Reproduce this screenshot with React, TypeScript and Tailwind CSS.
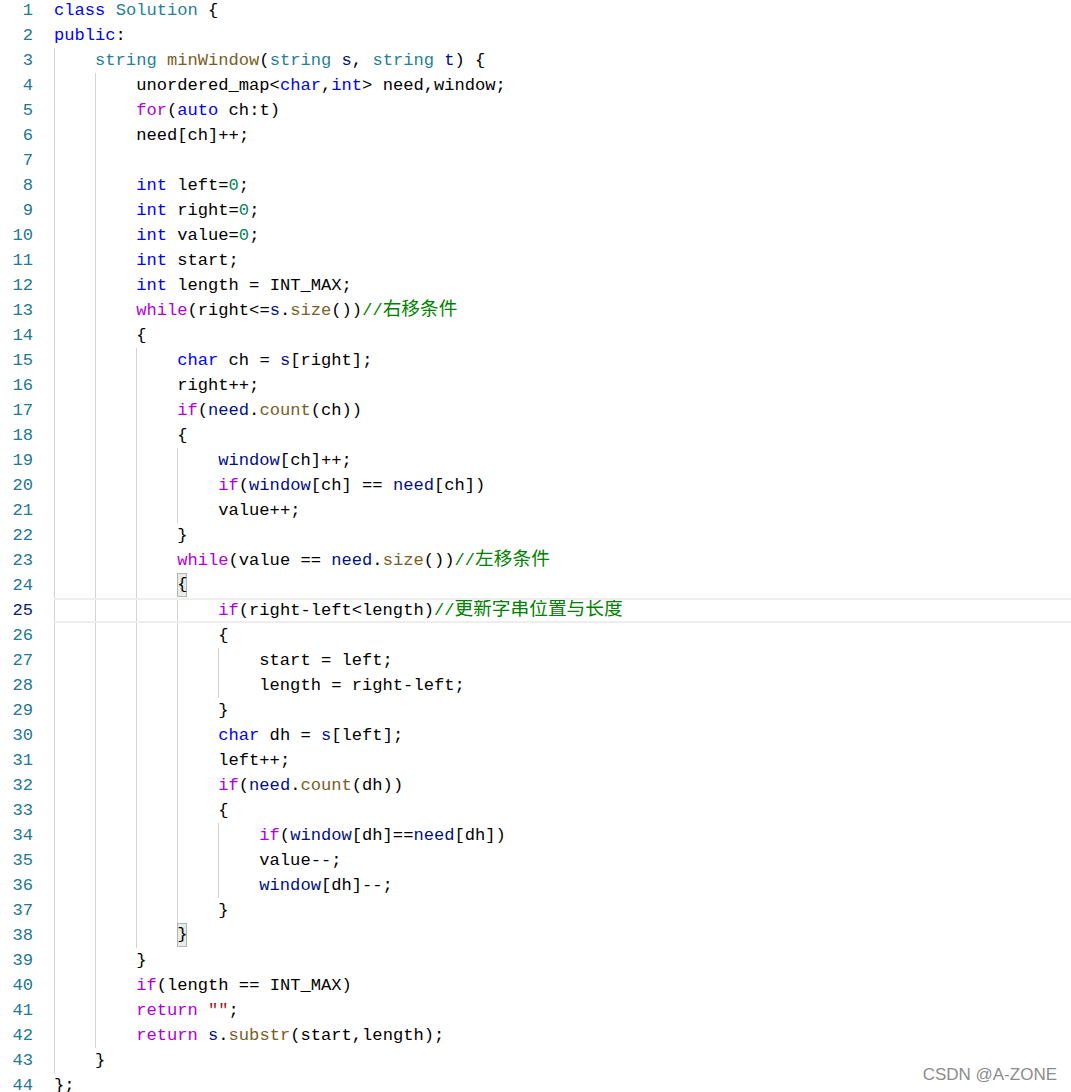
import React from "react";

const lines: string[] = [
  "class Solution {",
  "public:",
  "    string minWindow(string s, string t) {",
  "        unordered_map<char,int> need,window;",
  "        for(auto ch:t)",
  "        need[ch]++;",
  "",
  "        int left=0;",
  "        int right=0;",
  "        int value=0;",
  "        int start;",
  "        int length = INT_MAX;",
  "        while(right<=s.size())//右移条件",
  "        {",
  "            char ch = s[right];",
  "            right++;",
  "            if(need.count(ch))",
  "            {",
  "                window[ch]++;",
  "                if(window[ch] == need[ch])",
  "                value++;",
  "            }",
  "            while(value == need.size())//左移条件",
  "            {",
  "                if(right-left<length)//更新字串位置与长度",
  "                {",
  "                    start = left;",
  "                    length = right-left;",
  "                }",
  "                char dh = s[left];",
  "                left++;",
  "                if(need.count(dh))",
  "                {",
  "                    if(window[dh]==need[dh])",
  "                    value--;",
  "                    window[dh]--;",
  "                }",
  "            }",
  "        }",
  "        if(length == INT_MAX)",
  '        return "";',
  "        return s.substr(start,length);",
  "    }",
  "};",
];

const KW = new Set(["class", "public", "int", "char", "auto"]);
const CTRL = new Set(["for", "while", "if", "return"]);
const TYPE = new Set(["Solution", "string"]);
const FN = new Set(["minWindow", "size", "count", "substr"]);
const NAVY = new Set(["s", "t", "need", "window"]);

function tokenize(text: string, lineNo: number): React.ReactNode[] {
  const out: React.ReactNode[] = [];
  const re = /(\/\/.*$)|("[^"]*")|([A-Za-z_][A-Za-z0-9_]*)|(\d+)|(\s+)|(.)/g;
  let m: RegExpExecArray | null;
  let i = 0;
  const navyOk = lineNo < 4 || lineNo > 6;
  while ((m = re.exec(text)) !== null) {
    const k = i++;
    if (m[1]) {
      const cjk = m[1].slice(2);
      out.push(
        <span key={k} className="text-[#008000]">
          //
          <span className="text-[18.7px] leading-none [font-family:'Noto_Sans_CJK_SC',sans-serif]">{cjk}</span>
        </span>
      );
    } else if (m[2]) {
      out.push(
        <span key={k} className="text-[#a31515]">
          {m[2]}
        </span>
      );
    } else if (m[3]) {
      const w = m[3];
      let cls = "text-black";
      if (KW.has(w)) cls = "text-[#0000ff]";
      else if (CTRL.has(w)) cls = "text-[#af00db]";
      else if (TYPE.has(w)) cls = "text-[#267f99]";
      else if (FN.has(w)) cls = "text-[#795e26]";
      else if (navyOk && NAVY.has(w)) cls = "text-[#001080]";
      out.push(
        <span key={k} className={cls}>
          {w}
        </span>
      );
    } else if (m[4]) {
      out.push(
        <span key={k} className="text-[#098658]">
          {m[4]}
        </span>
      );
    } else {
      out.push(<span key={k}>{m[0]}</span>);
    }
  }
  return out;
}

function CodeLine({ text, n }: { text: string; n: number }) {
  const lead = text.length - text.trimStart().length;
  const level = text === "" ? 2 : Math.floor(lead / 4);
  const body = text.trimStart();
  const bracketMatch = n === 24 || n === 38;
  const current = n === 25;
  return (
    <div className="relative flex h-[25px] leading-[25px]">
      <div
        className={
          "w-[33px] shrink-0 text-right " +
          (current ? "text-[#0b216f]" : "text-[#237893]")
        }
      >
        {n}
      </div>
      <div className="w-[21px] shrink-0" />
      {current && (
        <div className="pointer-events-none absolute left-[54px] right-0 top-0 h-[25px] border-y-2 border-[#eeeeee]" />
      )}
      {Array.from({ length: level }).map((_, i) => (
        <div key={i} className="h-[25px] w-[4ch] shrink-0 border-l border-[#d3d3d3]" />
      ))}
      <div className="h-[25px] overflow-visible whitespace-pre">
        {bracketMatch ? (
          <>
            <span className="inline-block h-[24px] align-top leading-[24px] bg-[#e6ede6] shadow-[inset_0_0_0_1px_#b4b4b4]">
              {body[0]}
            </span>
            {tokenize(body.slice(1), n)}
          </>
        ) : (
          tokenize(body, n)
        )}
      </div>
    </div>
  );
}

export default function App() {
  return (
    <div className="relative h-[1092px] w-[1071px] overflow-hidden bg-white">
      <div className="mt-[-2px] text-[17.11px] [font-family:'Liberation_Mono','Noto_Sans_CJK_SC',monospace]">
        {lines.map((l, i) => (
          <CodeLine key={i} text={l} n={i + 1} />
        ))}
      </div>
      <div className="absolute bottom-[5px] right-[14px] text-[17px] text-[#8c8c8c] [font-family:'Liberation_Sans',Arial,sans-serif] [text-shadow:0_0_1px_#ffffff]">
        CSDN @A-ZONE
      </div>
    </div>
  );
}
